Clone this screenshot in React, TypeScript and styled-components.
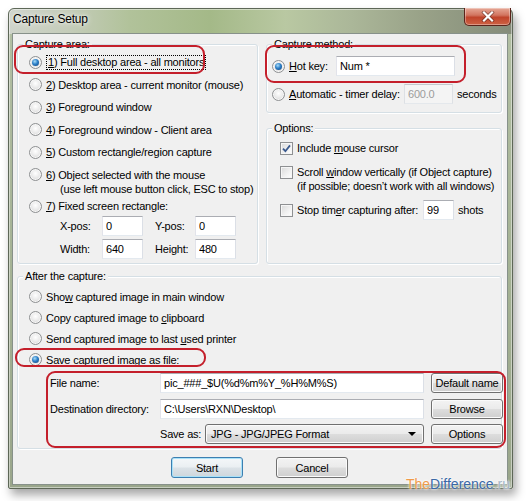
import React from "react";
import styled, { createGlobalStyle, css } from "styled-components";

const GlobalStyle = createGlobalStyle`
  html, body {
    margin: 0;
    padding: 0;
    background: #ffffff;
  }
  body {
    font-family: "Liberation Sans", Arial, sans-serif;
    font-size: 11px;
    letter-spacing: -0.2px;
    color: #000;
  }
  * {
    box-sizing: border-box;
  }
`;

const Page = styled.div`
  position: relative;
  width: 526px;
  height: 501px;
  padding: 8px 0 0 8px;
  overflow: hidden;
`;

const Window = styled.div`
  width: 505px;
  height: 481px;
  display: flex;
  flex-direction: column;
  border: 1px solid #5d6757;
  border-radius: 6px 6px 2px 2px;
  background:
    linear-gradient(90deg, #cfd4cb 0%, #c4ccb9 12%, #b1c29a 24%, #a4b988 40%, #b9c8a2 55%, #abb799 68%, #99a288 82%, #858c7a 100%) top / 100% 25px no-repeat,
    linear-gradient(180deg, #b3c0a4 0%, #a3b193 60%, #9aa68b 100%);
  box-shadow: 3px 6px 10px rgba(0, 0, 0, 0.35), inset 0 0 0 1px rgba(255, 255, 255, 0.45);
`;

const TitleBar = styled.div`
  height: 24px;
  flex: none;
  display: flex;
  align-items: flex-start;
  justify-content: space-between;
  padding: 0 1px 0 4px;
`;

const Title = styled.div`
  font-size: 12px;
  line-height: 14px;
  padding-top: 3px;
  text-shadow: 0 0 6px rgba(255, 255, 255, 0.9), 0 0 3px rgba(255, 255, 255, 0.8);
`;

const CloseButton = styled.div`
  width: 47px;
  height: 18px;
  margin-top: -1px;
  display: flex;
  align-items: center;
  justify-content: center;
  border: 1px solid #5a231a;
  border-top: none;
  border-radius: 0 0 5px 5px;
  background: linear-gradient(180deg, #e6a896 0%, #d27560 42%, #c0442b 55%, #cd6244 100%);
  box-shadow: inset 0 0 0 1px rgba(255, 255, 255, 0.35);
`;

const Client = styled.div`
  flex: 1;
  margin: 0 4px 3px 3px;
  display: flex;
  flex-direction: column;
  padding: 10px 5px 0 4px;
  background: #f0f0f0;
  border: 1px solid #87918a;
`;

const TopGrid = styled.div`
  display: grid;
  grid-template-columns: 241px 1fr;
  column-gap: 8px;
`;

const RightColumn = styled.div`
  display: flex;
  flex-direction: column;
`;

const Group = styled.div<{ $pad: string; $gap?: number }>`
  position: relative;
  display: flex;
  flex-direction: column;
  padding: ${(p) => p.$pad};
  margin-top: ${(p) => p.$gap ?? 0}px;
  border: 1px solid #d5dfe5;
  border-radius: 3px;
  box-shadow: inset 1px 1px 0 #ffffff, 1px 1px 0 #ffffff;
`;

const GrowGroup = styled(Group)`
  flex: 1;
`;

const Legend = styled.span`
  position: absolute;
  top: -8px;
  left: 5px;
  padding: 0 2px;
  line-height: 14px;
  background: #f0f0f0;
`;

const OptionRow = styled.div<{ $h?: number; $gap?: number }>`
  position: relative;
  display: flex;
  align-items: center;
  height: ${(p) => p.$h ?? 22.5}px;
  margin-top: ${(p) => p.$gap ?? 0}px;
  white-space: nowrap;
`;

const SubLine = styled.div<{ $indent: number; $gap: number }>`
  padding-left: ${(p) => p.$indent}px;
  margin-top: ${(p) => p.$gap}px;
  line-height: 14px;
  white-space: nowrap;
`;

const Radio = styled.span<{ $on?: boolean }>`
  position: relative;
  flex: none;
  width: 13px;
  height: 13px;
  margin-right: 4px;
  border-radius: 50%;
  border: 1px solid #8e9092;
  background: radial-gradient(circle at 50% 40%, #ffffff 0%, #ececec 45%, #cdcdcd 100%);
  box-shadow: inset 0 0 0 1px #f7f7f7;
  ${(p) =>
    p.$on &&
    css`
      &::after {
        content: "";
        position: absolute;
        inset: 2px;
        border-radius: 50%;
        background: radial-gradient(circle at 40% 35%, #a9dcf8 0%, #2d80c8 45%, #0e3b74 100%);
      }
    `}
`;

const Check = styled.span`
  flex: none;
  width: 13px;
  height: 13px;
  margin-right: 4px;
  display: flex;
  align-items: center;
  justify-content: center;
  border: 1px solid #8e9092;
  background: linear-gradient(135deg, #d9d9d9 0%, #f2f2f2 60%, #ffffff 100%);
  box-shadow: inset 0 0 0 1px #f6f6f6;
`;

const Focus = styled.span`
  border: 1px dotted #000;
  padding: 0 1px;
  line-height: 13px;
`;

const Label = styled.span<{ $w?: number; $indent?: number }>`
  flex: none;
  width: ${(p) => (p.$w ? `${p.$w}px` : "auto")};
  padding-left: ${(p) => p.$indent ?? 0}px;
  white-space: nowrap;
`;

const Trail = styled.span`
  margin-left: 4px;
`;

const TextBox = styled.input<{ $w?: number }>`
  width: ${(p) => (p.$w ? `${p.$w}px` : "100%")};
  height: 20px;
  margin: 0;
  padding: 0 3px;
  font: inherit;
  letter-spacing: inherit;
  color: #000;
  background: #ffffff;
  border: 1px solid;
  border-color: #abadb3 #dbdfe6 #e3e9ef #e2e3ea;
  border-radius: 0;
  outline: none;

  &:disabled {
    color: #9c9c9c;
    background: #f4f4f4;
    border-color: #c4c8cc #dde0e4 #e4e8ec #dde0e4;
  }
`;

const CoordGrid = styled.div`
  display: grid;
  grid-template-columns: 42px 41px 52px 41px;
  grid-auto-rows: 20px;
  row-gap: 3px;
  align-items: center;
  margin-left: 31px;
`;

const FieldGrid = styled.div`
  position: relative;
  display: grid;
  grid-template-columns: 103px 264px 72px;
  grid-auto-rows: 20px;
  column-gap: 7px;
  row-gap: 5.5px;
  align-items: center;
  margin: 3px 0 0 21px;
  white-space: nowrap;
`;

const SaveAsCell = styled.div`
  display: flex;
  align-items: center;
  height: 20px;
`;

const buttonSkin = css`
  border: 1px solid #707070;
  border-radius: 3px;
  background: linear-gradient(180deg, #f3f3f3 0%, #ebebeb 48%, #dddddd 52%, #cfcfcf 100%);
  box-shadow: inset 0 0 0 1px #fbfbfb;
`;

const Select = styled.div`
  ${buttonSkin};
  flex: 1;
  height: 20px;
  display: flex;
  align-items: center;
  justify-content: space-between;
  padding: 0 7px 0 5px;
`;

const Arrow = styled.span`
  width: 0;
  height: 0;
  border-left: 4px solid transparent;
  border-right: 4px solid transparent;
  border-top: 4px solid #000;
`;

const Button = styled.button<{ $default?: boolean; $h?: number }>`
  ${buttonSkin};
  width: 72px;
  height: ${(p) => p.$h ?? 20}px;
  margin: 0;
  padding: 0;
  font: inherit;
  letter-spacing: inherit;
  color: #000;
  ${(p) =>
    p.$default &&
    css`
      border-color: #3c7fb1;
      background: linear-gradient(180deg, #f4f7f9 0%, #eaeff2 48%, #dbe2e7 52%, #ced6dc 100%);
      box-shadow: inset 0 0 0 1px #a9e1f8;
    `}
`;

const ButtonBar = styled.div`
  display: flex;
  justify-content: center;
  gap: 33px;
  margin-top: 8px;
`;

const Highlight = styled.span<{ $top: number; $left: number; $w: number; $h: number }>`
  position: absolute;
  top: ${(p) => p.$top}px;
  left: ${(p) => p.$left}px;
  width: ${(p) => p.$w}px;
  height: ${(p) => p.$h}px;
  border: 2px solid #c41f2b;
  border-radius: 9px;
  pointer-events: none;
`;

const Watermark = styled.div`
  position: absolute;
  right: 16px;
  top: 476px;
  font-size: 14px;
  letter-spacing: 0;
  line-height: 16px;
  white-space: nowrap;
  text-shadow: 0 0 3px #fff, 0 0 2px #fff;
`;

const WmPart = styled.span<{ $c: string }>`
  color: ${(p) => p.$c};
`;

const CheckMark = () => (
  <svg width="9" height="9" viewBox="0 0 9 9">
    <path d="M1 4.6 L3.4 7.2 L8 1.4" fill="none" stroke="#3b5a8e" strokeWidth="1.8" />
  </svg>
);

const CloseGlyph = () => (
  <svg width="14" height="11" viewBox="0 0 14 11">
    <path d="M3 1.5 L11 9.5 M11 1.5 L3 9.5" stroke="#3a1510" strokeWidth="3.6" strokeLinecap="square" opacity="0.55" />
    <path d="M3 1.5 L11 9.5 M11 1.5 L3 9.5" stroke="#ffffff" strokeWidth="2.2" strokeLinecap="square" />
  </svg>
);

export default function App() {
  return (
    <Page>
      <GlobalStyle />
      <Window>
        <TitleBar>
          <Title>Capture Setup</Title>
          <CloseButton>
            <CloseGlyph />
          </CloseButton>
        </TitleBar>
        <Client>
          <TopGrid>
            <Group $pad="6px 4px 4px 11px">
              <Legend>Capture area:</Legend>
              <OptionRow>
                <Radio $on />
                <Focus>
                  <u>1</u>) Full desktop area - all monitors
                </Focus>
                <Highlight $top={-6} $left={-15} $w={191} $h={29} />
              </OptionRow>
              <OptionRow>
                <Radio />
                <span>
                  <u>2</u>) Desktop area - current monitor (mouse)
                </span>
              </OptionRow>
              <OptionRow>
                <Radio />
                <span>
                  <u>3</u>) Foreground window
                </span>
              </OptionRow>
              <OptionRow>
                <Radio />
                <span>
                  <u>4</u>) Foreground window - Client area
                </span>
              </OptionRow>
              <OptionRow>
                <Radio />
                <span>
                  <u>5</u>) Custom rectangle/region capture
                </span>
              </OptionRow>
              <OptionRow>
                <Radio />
                <span>
                  <u>6</u>) Object selected with the mouse
                </span>
              </OptionRow>
              <SubLine $indent={31} $gap={-4}>
                (use left mouse button click, ESC to stop)
              </SubLine>
              <OptionRow $h={20}>
                <Radio />
                <span>
                  <u>7</u>) Fixed screen rectangle:
                </span>
              </OptionRow>
              <CoordGrid>
                <Label>X-pos:</Label>
                <TextBox readOnly value="0" />
                <Label $indent={12}>Y-pos:</Label>
                <TextBox readOnly value="0" />
                <Label>Width:</Label>
                <TextBox readOnly value="640" />
                <Label $indent={12}>Height:</Label>
                <TextBox readOnly value="480" />
              </CoordGrid>
            </Group>

            <RightColumn>
              <Group $pad="10px 4px 7px 5px">
                <Legend>Capture method:</Legend>
                <OptionRow $h={22}>
                  <Radio $on />
                  <Label $w={47}>
                    <u>H</u>ot key:
                  </Label>
                  <TextBox $w={119} readOnly value="Num *" />
                  <Highlight $top={-10} $left={-7} $w={201} $h={38} />
                </OptionRow>
                <OptionRow $h={22} $gap={6}>
                  <Radio />
                  <Label $w={115}>
                    <u>A</u>utomatic - timer delay:
                  </Label>
                  <TextBox $w={49} disabled value="600.0" />
                  <Trail>seconds</Trail>
                </OptionRow>
              </Group>

              <GrowGroup $pad="7px 4px 4px 13px" $gap={15}>
                <Legend>Options:</Legend>
                <OptionRow $h={24}>
                  <Check>
                    <CheckMark />
                  </Check>
                  <span>
                    Include <u>m</u>ouse cursor
                  </span>
                </OptionRow>
                <OptionRow $h={24}>
                  <Check />
                  <span>
                    Scroll <u>w</u>indow vertically (if Object capture)
                  </span>
                </OptionRow>
                <SubLine $indent={17} $gap={-5}>
                  (if possible; doesn’t work with all windows)
                </SubLine>
                <OptionRow $h={20} $gap={7}>
                  <Check />
                  <Label $w={126}>
                    Stop tim<u>e</u>r capturing after:
                  </Label>
                  <TextBox $w={31} readOnly value="99" />
                  <Trail>shots</Trail>
                </OptionRow>
              </GrowGroup>
            </RightColumn>
          </TopGrid>

          <Group $pad="9px 6px 4px 11px" $gap={12}>
            <Legend>After the capture:</Legend>
            <OptionRow $h={21}>
              <Radio />
              <span>
                Sho<u>w</u> captured image in main window
              </span>
            </OptionRow>
            <OptionRow $h={21}>
              <Radio />
              <span>
                Copy captured image to <u>c</u>lipboard
              </span>
            </OptionRow>
            <OptionRow $h={21}>
              <Radio />
              <span>
                Send captured image to last <u>u</u>sed printer
              </span>
            </OptionRow>
            <OptionRow $h={21}>
              <Radio $on />
              <span>
                <u>S</u>ave captured image as file:
              </span>
              <Highlight $top={-1} $left={-14} $w={191} $h={19} />
            </OptionRow>
            <FieldGrid>
              <Label>File name:</Label>
              <TextBox readOnly value="pic_###_$U(%d%m%Y_%H%M%S)" />
              <Button>Default name</Button>
              <Label>Destination directory:</Label>
              <TextBox readOnly value={"C:\\Users\\RXN\\Desktop\\"} />
              <Button>Browse</Button>
              <span />
              <SaveAsCell>
                <Label $w={45}>Save as:</Label>
                <Select>
                  <span>JPG - JPG/JPEG Format</span>
                  <Arrow />
                </Select>
              </SaveAsCell>
              <Button>Options</Button>
              <Highlight $top={-2} $left={-4} $w={460} $h={77} />
            </FieldGrid>
          </Group>

          <ButtonBar>
            <Button $default $h={21}>
              Start
            </Button>
            <Button $h={21}>Cancel</Button>
          </ButtonBar>
        </Client>
      </Window>
      <Watermark>
        <WmPart $c="#f09a4a">The</WmPart>
        <WmPart $c="#3a68a6">Difference</WmPart>
        <WmPart $c="#a5b5c6">.ru</WmPart>
      </Watermark>
    </Page>
  );
}
